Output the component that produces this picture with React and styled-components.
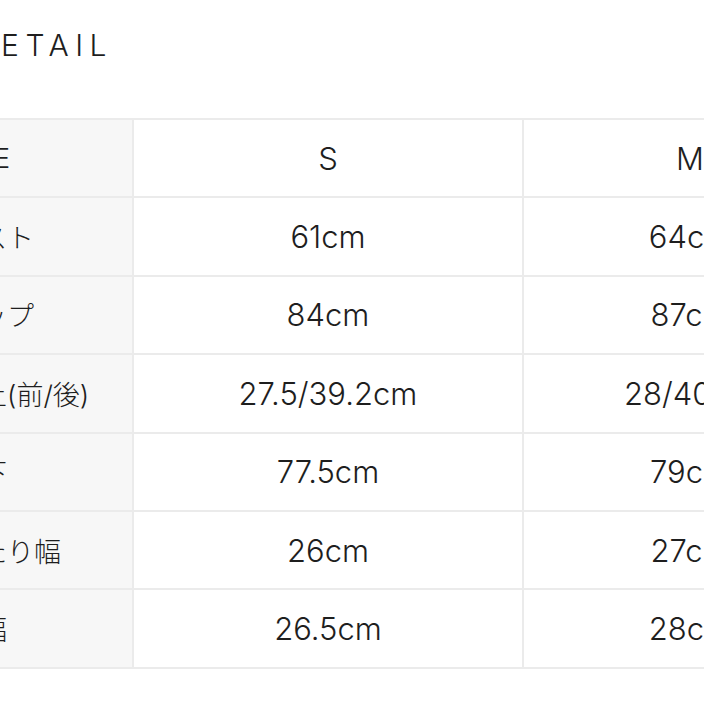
import styled, { createGlobalStyle } from 'styled-components'

const Global = createGlobalStyle`
  html, body {
    margin: 0;
    background: #fff;
    overflow: hidden;
  }
  body {
    font-family: Inter, "Noto Sans CJK JP", sans-serif;
    color: #1e1e1e;
  }
`

const Page = styled.div`
  margin-left: -62px;
  width: 930px;
  padding-top: 28px;
`

const Heading = styled.h2`
  margin: 0 0 56px 35px;
  font-size: 30px;
  line-height: 34px;
  font-weight: 300;
  letter-spacing: 6.5px;
`

const Grid = styled.div`
  display: grid;
  grid-template-columns: 192px 388px 332px;
  gap: 2px;
  padding: 2px;
  background: #ebebeb;
  width: max-content;
`

const Cell = styled.div`
  height: 76.4px;
  display: flex;
  align-items: center;
  justify-content: ${p => (p.$head ? 'flex-start' : 'center')};
  padding: ${p => (p.$head ? '0 0 0 13px' : '0')};
  background: ${p => (p.$head ? '#f7f7f7' : '#fff')};
  font-size: ${p => (p.$head ? '27px' : '31px')};
  font-weight: 300;
  white-space: nowrap;
  overflow: hidden;
`

const rows = [
  ['SIZE', 'S', 'M'],
  ['バスト', '61cm', '64cm'],
  ['ヒップ', '84cm', '87cm'],
  ['股上(前/後)', '27.5/39.2cm', '28/40cm'],
  ['股下', '77.5cm', '79cm'],
  ['わたり幅', '26cm', '27cm'],
  ['裾幅', '26.5cm', '28cm'],
]

export default function App() {
  return (
    <>
      <Global />
      <Page>
        <Heading>DETAIL</Heading>
        <Grid>
          {rows.map(([label, s, m]) => [
            <Cell key={label} $head>{label}</Cell>,
            <Cell key={label + 's'}>{s}</Cell>,
            <Cell key={label + 'm'}>{m}</Cell>,
          ])}
        </Grid>
      </Page>
    </>
  )
}
